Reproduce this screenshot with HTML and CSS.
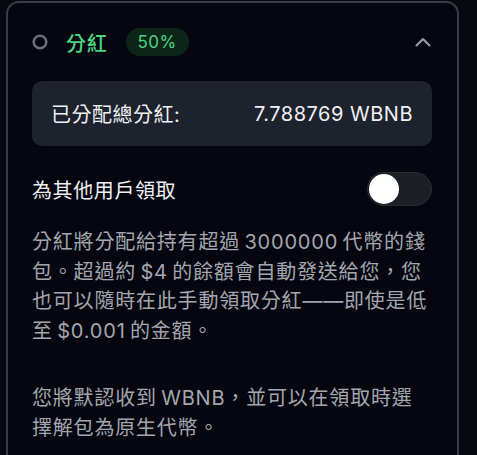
FILE: index.html
```html
<!DOCTYPE html>
<html lang="zh-Hant">
<head>
<meta charset="utf-8">
<title>分紅</title>
<link rel="stylesheet" href="styles.css">
</head>
<body>
<section class="card">
  <header class="card-head">
    <div class="head-left">
      <svg class="status-ring" width="16" height="16" viewBox="0 0 16 16"><circle cx="8" cy="8" r="6.3" fill="none" stroke="#6b6f78" stroke-width="2.6"/></svg>
      <span class="title">分紅</span>
      <span class="badge">50%</span>
    </div>
    <svg class="chevron" width="16" height="10" viewBox="0 0 16 10"><path d="M1.5 8.5 L8 2 L14.5 8.5" fill="none" stroke="#9a9ea7" stroke-width="2" stroke-linecap="round" stroke-linejoin="round"/></svg>
  </header>

  <div class="total">
    <span class="total-label">已分配總分紅:</span>
    <span class="total-value">7.788769 WBNB</span>
  </div>

  <div class="claim-row">
    <span class="claim-label">為其他用戶領取</span>
    <button class="toggle" type="button" aria-pressed="false"><span class="knob"></span></button>
  </div>

  <p class="desc">分紅將分配給持有超過 3000000 代幣的錢包。超過約 $4 的餘額會自動發送給您，您也可以隨時在此手動領取分紅——即使是低至 $0.001 的金額。</p>
  <p class="desc desc-second">您將默認收到 WBNB，並可以在領取時選擇解包為原生代幣。</p>
</section>
</body>
</html>
```

FILE: styles.css
```css
html, body {
  margin: 0;
  padding: 0;
  background: #08090f;
  height: 100%;
}

body {
  font-family: "Inter", "Noto Sans CJK TC", sans-serif;
  overflow: hidden;
}

.card {
  margin: 1px 0 0 6px;
  width: 453px;
  box-sizing: border-box;
  min-height: 480px;
  background: #050610;
  border: 2px solid #3a3d46;
  border-radius: 13px;
  padding: 25px 25px 0 24px;
}

.card-head {
  display: flex;
  align-items: center;
  justify-content: space-between;
  height: 28px;
}

.head-left {
  display: flex;
  align-items: center;
}

.status-ring {
  display: block;
}

.title {
  margin-left: 18px;
  color: #4fd481;
  font-size: 20px;
  font-weight: 500;
  letter-spacing: 0.8px;
}

.badge {
  margin-left: 18px;
  height: 28px;
  padding: 0 12px;
  border-radius: 14px;
  background: #0b2619;
  color: #4fd481;
  font-size: 17px;
  line-height: 28px;
  letter-spacing: 0.4px;
}

.chevron {
  display: block;
  margin-right: 1px;
}

.total {
  margin-top: 25px;
  height: 65px;
  box-sizing: border-box;
  display: flex;
  align-items: center;
  justify-content: space-between;
  padding: 0 19px;
  background: #1d222d;
  border-radius: 10px;
  color: #eef0f3;
  font-size: 20px;
  letter-spacing: 0.5px;
}

.claim-row {
  margin-top: 26px;
  display: flex;
  align-items: center;
  justify-content: space-between;
  height: 34px;
}

.claim-label {
  color: #eef0f3;
  font-size: 20px;
  letter-spacing: 0.6px;
}

.toggle {
  width: 65px;
  height: 34px;
  box-sizing: border-box;
  border: 1px solid #2a2c33;
  border-radius: 17px;
  background: #1d1f26;
  padding: 1px;
  display: flex;
  align-items: center;
  cursor: pointer;
}

.knob {
  width: 30px;
  height: 30px;
  border-radius: 50%;
  background: #ffffff;
}

.desc {
  margin: 22px 0 0;
  color: #a3a6ad;
  font-size: 20px;
  line-height: 29.5px;
  letter-spacing: 0.8px;
  word-spacing: -2px;
}

.desc-second {
  margin-top: 38px;
}
```
